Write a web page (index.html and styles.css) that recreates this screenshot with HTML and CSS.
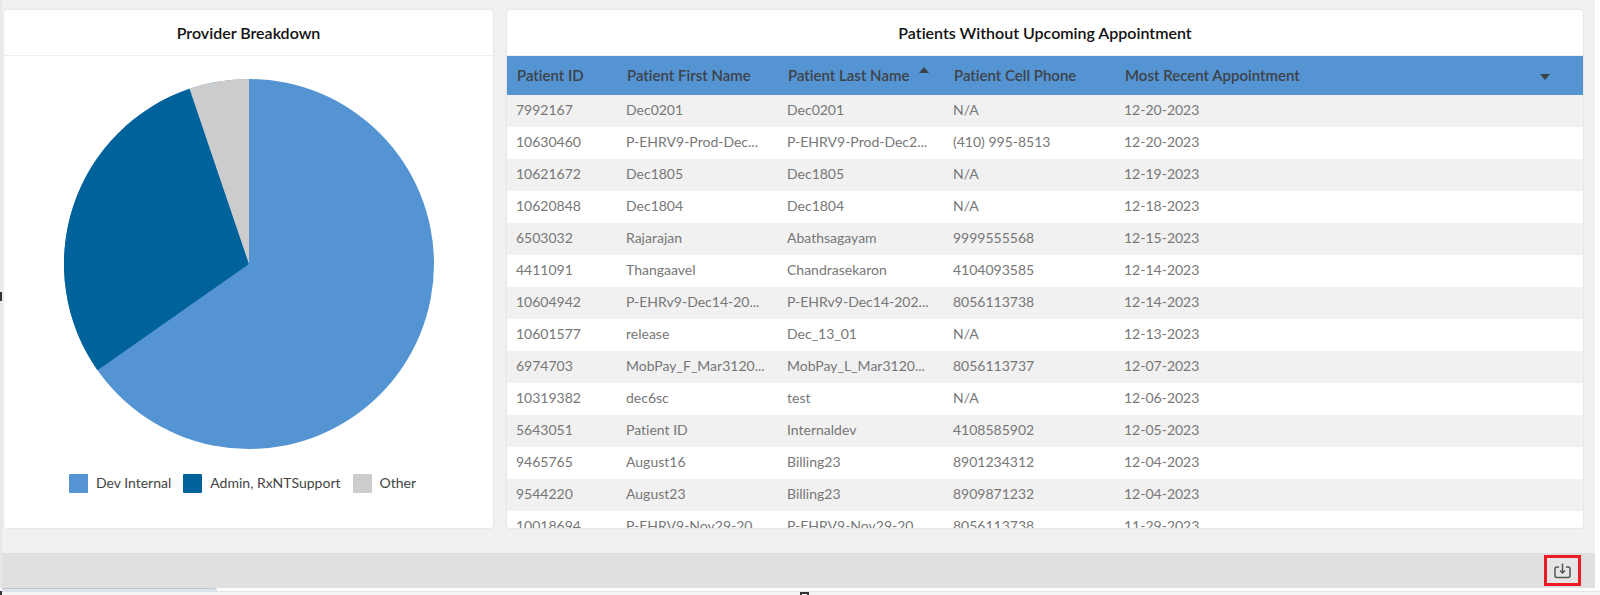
FILE: index.html
```
<!DOCTYPE html>
<html lang="en">
<head>
  <meta charset="utf-8">
  <title>Patient Dashboard</title>
  <link rel="stylesheet" href="styles.css">
</head>
<body>
  <div class="page">
    <main class="dashboard">
      <section class="panel">
        <h2 class="panel-title">Provider Breakdown</h2>
        <div class="chart">
          <svg class="pie" viewBox="0 0 370 370" role="img" aria-label="Provider breakdown">
            <circle cx="185" cy="185" r="185" fill="#5594d2"/>
            <path d="M185 185L33.5 291.3A185 185 0 0 1 125.6 9.8Z" fill="#00629b"/>
            <path d="M185 185L125.6 9.8A185 185 0 0 1 185 0Z" fill="#ccc"/>
          </svg>
          <ul class="legend">
            <li><span class="swatch swatch-dev"></span>Dev Internal</li>
            <li><span class="swatch swatch-admin"></span>Admin, RxNTSupport</li>
            <li><span class="swatch swatch-other"></span>Other</li>
          </ul>
        </div>
      </section>

      <section class="panel">
        <h2 class="panel-title">Patients Without Upcoming Appointment</h2>
        <table class="patients">
          <colgroup>
            <col class="col-id">
            <col class="col-first">
            <col class="col-last">
            <col class="col-phone">
            <col>
          </colgroup>
          <thead>
            <tr>
              <th>Patient ID</th>
              <th>Patient First Name</th>
              <th>
                <div class="th-sorted">Patient Last Name
                  <svg class="sort-up" viewBox="0 0 10 6"><path d="M5 0L10 6H0Z"/></svg>
                </div>
              </th>
              <th>Patient Cell Phone</th>
              <th>
                <div class="th-menu">Most Recent Appointment
                  <button class="menu-btn" type="button" aria-label="Column options">
                    <svg viewBox="0 0 10 6"><path d="M0 0H10L5 6Z"/></svg>
                  </button>
                </div>
              </th>
            </tr>
          </thead>
          <tbody>
            <tr><td>7992167</td><td>Dec0201</td><td>Dec0201</td><td>N/A</td><td>12-20-2023</td></tr>
            <tr><td>10630460</td><td>P-EHRV9-Prod-Dec...</td><td>P-EHRV9-Prod-Dec2...</td><td>(410) 995-8513</td><td>12-20-2023</td></tr>
            <tr><td>10621672</td><td>Dec1805</td><td>Dec1805</td><td>N/A</td><td>12-19-2023</td></tr>
            <tr><td>10620848</td><td>Dec1804</td><td>Dec1804</td><td>N/A</td><td>12-18-2023</td></tr>
            <tr><td>6503032</td><td>Rajarajan</td><td>Abathsagayam</td><td>9999555568</td><td>12-15-2023</td></tr>
            <tr><td>4411091</td><td>Thangaavel</td><td>Chandrasekaron</td><td>4104093585</td><td>12-14-2023</td></tr>
            <tr><td>10604942</td><td>P-EHRv9-Dec14-20...</td><td>P-EHRv9-Dec14-202...</td><td>8056113738</td><td>12-14-2023</td></tr>
            <tr><td>10601577</td><td>release</td><td>Dec_13_01</td><td>N/A</td><td>12-13-2023</td></tr>
            <tr><td>6974703</td><td>MobPay_F_Mar3120...</td><td>MobPay_L_Mar3120...</td><td>8056113737</td><td>12-07-2023</td></tr>
            <tr><td>10319382</td><td>dec6sc</td><td>test</td><td>N/A</td><td>12-06-2023</td></tr>
            <tr><td>5643051</td><td>Patient ID</td><td>Internaldev</td><td>4108585902</td><td>12-05-2023</td></tr>
            <tr><td>9465765</td><td>August16</td><td>Billing23</td><td>8901234312</td><td>12-04-2023</td></tr>
            <tr><td>9544220</td><td>August23</td><td>Billing23</td><td>8909871232</td><td>12-04-2023</td></tr>
            <tr><td>10018694</td><td>P-EHRV9-Nov29-20...</td><td>P-EHRV9-Nov29-20...</td><td>8056113738</td><td>11-29-2023</td></tr>
          </tbody>
        </table>
      </section>
    </main>

    <footer class="toolbar">
      <button class="download-btn" type="button" aria-label="Download">
        <svg viewBox="0 0 17 16" fill="none" stroke="#555" stroke-width="1.5">
          <path d="M5 4H3Q1 4 1 6V12.500Q1 14.500 3 14.500H14Q16 14.500 16 12.500V6Q16 4 14 4H12"/>
          <path d="M8.500 0.500V9.500M6 7.500L8.500 10L11 7.500"/>
        </svg>
      </button>
    </footer>
  </div>

  <div class="bottom-strip"><div class="status-tab"></div></div>

  <span class="handle handle-left"></span>
  <span class="handle handle-corner"></span>
  <span class="handle handle-bottom"></span>
</body>
</html>
```

FILE: styles.css
```
* {
  box-sizing: border-box;
}

body {
  margin: 0;
  height: 100vh;
  display: flex;
  flex-direction: column;
  position: relative;
  overflow: hidden;
  font-family: Lato, "Liberation Sans", sans-serif;
  font-size: 14px;
  font-variant-ligatures: none;
  color: #777;
  background: #fff;
}

.page {
  flex: 1;
  min-height: 0;
  display: flex;
  flex-direction: column;
  margin-right: 5px;
  background: #f1f1f1;
  border-left: 2px solid #e8e8e8;
}

.dashboard {
  flex: 1;
  min-height: 0;
  display: grid;
  grid-template-columns: 489fr 1076fr;
  grid-template-rows: minmax(0, 1fr);
  gap: 14px;
  padding: 10px 12px 25px 2px;
}

.panel {
  overflow: hidden;
  background: #fff;
  border-radius: 3px;
  box-shadow: 0 0 2px rgba(0, 0, 0, 0.15);
}

.panel-title {
  margin: 0;
  height: 46px;
  line-height: 46px;
  border-bottom: 1px solid #eee;
  text-align: center;
  font-size: 16px;
  font-weight: 600;
  color: #111;
}

/* provider chart */
.chart {
  padding-top: 23px;
}

.pie {
  display: block;
  width: 370px;
  height: 370px;
  margin: 0 auto;
}

.legend {
  display: flex;
  justify-content: center;
  margin: 25px 0 0;
  padding: 0;
  list-style: none;
  line-height: 18px;
  color: #444;
}

.legend li {
  display: flex;
  gap: 8px;
  margin-right: 12px;
}

.swatch {
  width: 19px;
  height: 19px;
  border-radius: 1px;
}

.swatch-dev {
  background: #5594d2;
}

.swatch-admin {
  background: #00629b;
}

.swatch-other {
  background: #ccc;
}

/* patients table */
.patients {
  width: 100%;
  table-layout: fixed;
  border-collapse: collapse;
  text-align: left;
}

.col-id {
  width: 110px;
}

.col-first {
  width: 161px;
}

.col-last {
  width: 166px;
}

.col-phone {
  width: 171px;
}

.patients th {
  height: 39px;
  padding: 0 0 1px 10px;
  background: #5594d2;
  color: #3d4248;
  font-size: 15px;
  font-weight: 600;
  white-space: nowrap;
}

.patients td {
  height: 32px;
  padding: 0 0 3px 9px;
  white-space: nowrap;
}

.patients tbody tr:nth-child(odd) {
  background: #f1f1f1;
}

.th-sorted,
.th-menu {
  display: flex;
  align-items: center;
}

.th-sorted {
  gap: 10px;
}

.th-menu {
  justify-content: space-between;
  padding-right: 33px;
}

.sort-up,
.menu-btn svg {
  display: block;
  width: 10px;
  height: 6px;
  fill: #3d4248;
}

.sort-up {
  margin-bottom: 10px;
}

.menu-btn {
  padding: 4px 0 0;
  border: none;
  background: none;
  cursor: pointer;
}

/* footer */
.toolbar {
  display: flex;
  justify-content: flex-end;
  align-items: center;
  height: 35px;
  padding-right: 14px;
  background: #e0e0e0;
}

.download-btn {
  display: flex;
  align-items: center;
  justify-content: center;
  width: 37px;
  height: 31px;
  padding: 0;
  border: 3px solid #ed1c24;
  background: #e6e6e6;
  cursor: pointer;
}

.download-btn svg {
  width: 17px;
  height: 16px;
}

.bottom-strip {
  height: 7px;
  background: linear-gradient(#fff 3px, #e4e4e4 3px, #e4e4e4 4px, #f4f4f4 4px);
}

.status-tab {
  width: 215px;
  height: 4px;
  margin-left: 2px;
  background: #dce1ea;
  border-top: 1px solid #c4c4c4;
  border-radius: 0 3px 0 0;
}

.handle {
  position: absolute;
  width: 9px;
  height: 9px;
  border: 2px solid #333;
  background: #fff;
}

.handle-left {
  left: -7px;
  top: 49%;
}

.handle-corner {
  left: -7px;
  bottom: -5px;
}

.handle-bottom {
  left: 50%;
  bottom: -6px;
}
```
